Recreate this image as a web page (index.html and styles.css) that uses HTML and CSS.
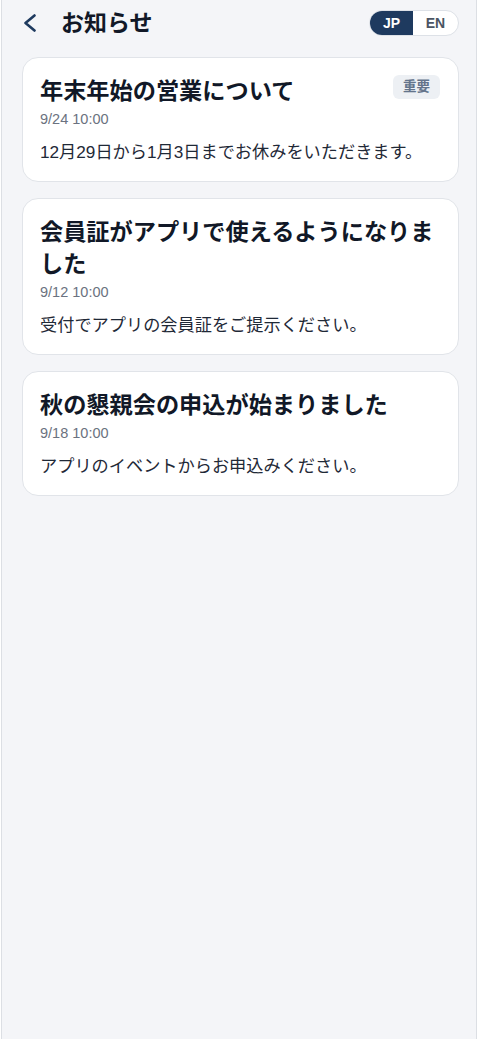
FILE: index.html
```html
<!DOCTYPE html>
<html lang="ja">
<head>
	<meta charset="utf-8">
	<title>お知らせ</title>
	<link rel="stylesheet" href="styles.css">
</head>
<body>
	<div class="app">
		<header class="topbar">
			<a class="back" href="#" aria-label="戻る">
				<svg width="14" height="18" viewBox="0 0 14 18"><path d="M11.5 1.5 L2.5 9 L11.5 16.5" fill="none" stroke="#1e3a5f" stroke-width="2.6" stroke-linecap="round" stroke-linejoin="round"/></svg>
			</a>
			<h1 class="page-title">お知らせ</h1>
			<div class="lang">
				<button class="lang-btn active">JP</button>
				<button class="lang-btn">EN</button>
			</div>
		</header>

		<main class="news-list">
			<article class="card">
				<div class="card-head">
					<h2 class="card-title">年末年始の営業について</h2>
					<span class="badge">重要</span>
				</div>
				<div class="card-date">9/24 10:00</div>
				<p class="card-body">12月29日から1月3日までお休みをいただきます。</p>
			</article>

			<article class="card">
				<div class="card-head">
					<h2 class="card-title">会員証がアプリで使えるようになりました</h2>
				</div>
				<div class="card-date">9/12 10:00</div>
				<p class="card-body">受付でアプリの会員証をご提示ください。</p>
			</article>

			<article class="card">
				<div class="card-head">
					<h2 class="card-title">秋の懇親会の申込が始まりました</h2>
				</div>
				<div class="card-date">9/18 10:00</div>
				<p class="card-body">アプリのイベントからお申込みください。</p>
			</article>
		</main>
	</div>
</body>
</html>
```

FILE: styles.css
```css
*{
	box-sizing: border-box;
}
body{
	margin: 0;
	background: #fff;
	font-family: "Liberation Sans", "Noto Sans CJK JP", sans-serif;
	color: #111827;
}
.app{
	width: 476px;
	min-height: 100vh;
	margin-left: 1px;
	padding: 0 17px 0 20px;
	background: #f4f5f8;
	border-left: 1px solid #dcdfe4;
	border-right: 1px solid #dcdfe4;
}
.topbar{
	display: flex;
	align-items: center;
	height: 46px;
}
.back{
	display: flex;
	width: 14px;
	height: 18px;
	margin-left: 1px;
}
.page-title{
	margin: 0 0 0 24px;
	font-size: 23px;
	font-weight: 700;
	line-height: 1;
	flex: 1;
}
.lang{
	display: flex;
	height: 26px;
	border: 1px solid #dde1e7;
	border-radius: 13px;
	overflow: hidden;
	background: #fff;
}
.lang-btn{
	border: 0;
	margin: 0;
	padding: 0;
	background: none;
	font-family: inherit;
	font-size: 14px;
	font-weight: 700;
	color: #4b5563;
	width: 45px;
}
.lang-btn.active{
	width: 43px;
	background: #1e3a5f;
	color: #fff;
}
.news-list{
	display: flex;
	flex-direction: column;
	gap: 16px;
	padding-top: 11px;
}
.card{
	background: #fff;
	border: 1px solid #e1e4e9;
	border-radius: 16px;
	padding: 17px 18px 17px 17px;
}
.card-head{
	display: flex;
	align-items: flex-start;
	gap: 12px;
}
.card-title{
	flex: 1;
	margin: 0;
	font-size: 23.2px;
	line-height: 32px;
	font-weight: 700;
	color: #111827;
}
.badge{
	flex: none;
	height: 24px;
	line-height: 24px;
	padding: 0 10px;
	border-radius: 6px;
	background: #edf0f4;
	color: #64748b;
	font-size: 13.5px;
	font-weight: 700;
}
.card-date{
	margin-top: 2px;
	font-size: 14.5px;
	line-height: 20px;
	color: #6b7280;
}
.card-body{
	margin: 11px 0 0;
	font-size: 17.2px;
	line-height: 24px;
	color: #1f2937;
}
```
